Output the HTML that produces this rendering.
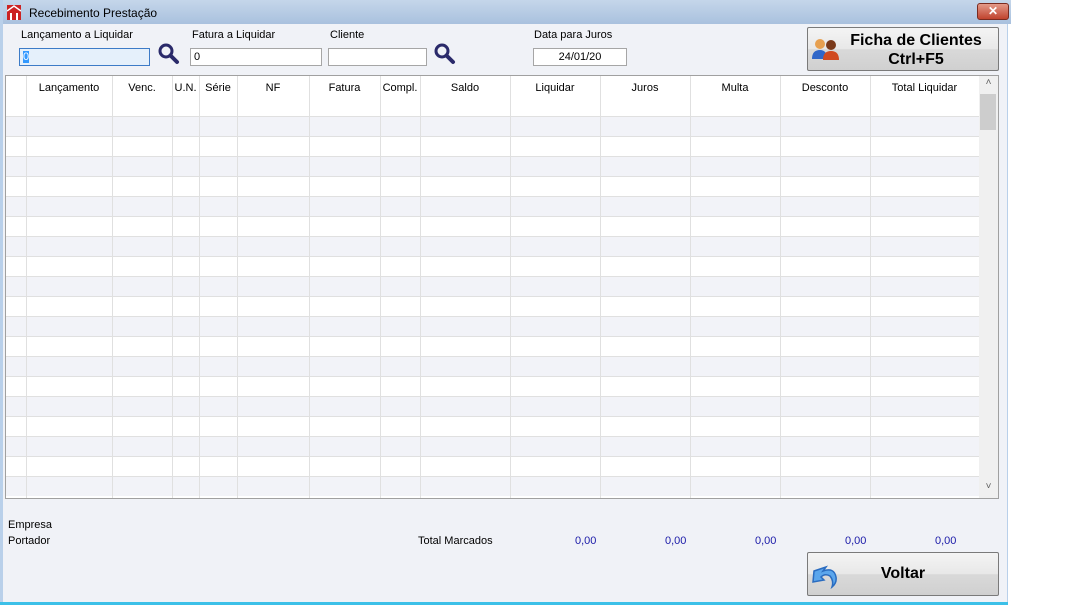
<!DOCTYPE html>
<html><head><meta charset="utf-8"><style>
*{margin:0;padding:0;box-sizing:border-box}
body{width:1080px;height:605px;background:#fff;font-family:"Liberation Sans",Arial,sans-serif;font-size:11px;color:#000;position:relative;overflow:hidden}
.win{position:absolute;left:0;top:0;width:1008px;height:605px;background:#f0f2f7;border-left:3px solid #b9d0ea;border-right:1px solid #b9d0ea}
.title{position:absolute;left:0;top:0;width:1008px;height:24px;background:linear-gradient(#c5d6ea,#a9c1de);}
.title span{position:absolute;left:26px;top:6px;font-size:12px}
.abs{position:absolute}
.lbl{position:absolute;font-size:11px}
.inp{position:absolute;height:18px;background:#fff;border:1px solid #a6a6a6;font-size:11px;padding:2px 3px}
.btn{position:absolute;border:1px solid #7a7a7a;border-radius:2px;background:linear-gradient(#f4f4f4 0,#e8e8e8 50%,#d9d9d9 51%,#d0d0d0 100%);font-weight:bold;text-align:center}
.grid{position:absolute;left:5px;top:75px;width:994px;height:424px;border:1px solid #a0a0a0;background:#fff;overflow:hidden}
.v{position:absolute;top:0;width:1px;height:424px;background:#e0e0e0}
.h{position:absolute;left:0;width:973px;height:20px;border-top:1px solid #e0e0e0}
.hd{position:absolute;top:6px;text-align:center;font-size:11px}
.num{position:absolute;top:535px;color:#1a1aa8;font-size:11px}
</style></head><body>
<div class="win">
<div class="title"><span>Recebimento Prestação</span></div>
</div>
<svg class="abs" style="left:7px;top:5px" width="14" height="15"><rect width="14" height="15" fill="#c22"/><path d="M0 6 L7 1 L14 6" stroke="#fff" stroke-width="1.5" fill="none"/><rect x="3" y="8" width="2" height="7" fill="#fff"/><rect x="9" y="8" width="2" height="7" fill="#fff"/></svg>
<div class="abs" style="left:977px;top:3px;width:32px;height:17px;border:1px solid #7a2b20;border-radius:3px;background:linear-gradient(#e49a89,#c0432e);color:#fff;font-weight:bold;text-align:center;font-size:12px;line-height:15px">✕</div>

<div class="lbl" style="left:21px;top:29px">Lançamento a Liquidar</div>
<div class="inp" style="left:19px;top:48px;width:131px;border-color:#3d7bc7;background:#e5f0fb"><span style="background:#3399ff;color:#fff">0</span></div>
<svg class="abs" style="left:158px;top:43px" width="22" height="22"><circle cx="8" cy="8" r="6" fill="none" stroke="#2a2a6a" stroke-width="3"/><line x1="12.5" y1="12.5" x2="19" y2="19" stroke="#2a2a6a" stroke-width="4" stroke-linecap="round"/></svg>
<div class="lbl" style="left:192px;top:29px">Fatura a Liquidar</div>
<div class="inp" style="left:190px;top:48px;width:132px">0</div>
<div class="lbl" style="left:330px;top:29px">Cliente</div>
<div class="inp" style="left:328px;top:48px;width:99px"></div>
<svg class="abs" style="left:434px;top:43px" width="22" height="22"><circle cx="8" cy="8" r="6" fill="none" stroke="#2a2a6a" stroke-width="3"/><line x1="12.5" y1="12.5" x2="19" y2="19" stroke="#2a2a6a" stroke-width="4" stroke-linecap="round"/></svg>
<div class="lbl" style="left:534px;top:29px">Data para Juros</div>
<div class="inp" style="left:533px;top:48px;width:94px;text-align:center">24/01/20</div>

<div class="btn" style="left:807px;top:27px;width:192px;height:44px;font-size:16px;line-height:19px;padding-top:3px;padding-left:26px">Ficha de Clientes<br>Ctrl+F5</div>
<svg class="abs" style="left:810px;top:35px" width="32" height="26"><circle cx="10" cy="9" r="5" fill="#e7a050"/><path d="M2 24 Q2 15 10 15 Q17 15 17 24Z" fill="#2f66c8"/><circle cx="21" cy="10" r="5" fill="#7a3a1a"/><path d="M13 25 Q13 16 21 16 Q29 16 29 25Z" fill="#d04a20"/></svg>

<div class="grid">
<div class="h" style="top:40px;background:#f2f3f8"></div>
<div class="h" style="top:60px"></div>
<div class="h" style="top:80px;background:#f2f3f8"></div>
<div class="h" style="top:100px"></div>
<div class="h" style="top:120px;background:#f2f3f8"></div>
<div class="h" style="top:140px"></div>
<div class="h" style="top:160px;background:#f2f3f8"></div>
<div class="h" style="top:180px"></div>
<div class="h" style="top:200px;background:#f2f3f8"></div>
<div class="h" style="top:220px"></div>
<div class="h" style="top:240px;background:#f2f3f8"></div>
<div class="h" style="top:260px"></div>
<div class="h" style="top:280px;background:#f2f3f8"></div>
<div class="h" style="top:300px"></div>
<div class="h" style="top:320px;background:#f2f3f8"></div>
<div class="h" style="top:340px"></div>
<div class="h" style="top:360px;background:#f2f3f8"></div>
<div class="h" style="top:380px"></div>
<div class="h" style="top:400px;background:#f2f3f8"></div>
<div class="v" style="left:20px"></div><div class="v" style="left:106px"></div><div class="v" style="left:166px"></div><div class="v" style="left:193px"></div><div class="v" style="left:231px"></div><div class="v" style="left:303px"></div><div class="v" style="left:374px"></div><div class="v" style="left:414px"></div><div class="v" style="left:504px"></div><div class="v" style="left:594px"></div><div class="v" style="left:684px"></div><div class="v" style="left:774px"></div><div class="v" style="left:864px"></div>
<div class="hd" style="left:20px;width:86px">Lançamento</div>
<div class="hd" style="left:106px;width:60px">Venc.</div>
<div class="hd" style="left:166px;width:27px">U.N.</div>
<div class="hd" style="left:193px;width:38px">Série</div>
<div class="hd" style="left:231px;width:72px">NF</div>
<div class="hd" style="left:303px;width:71px">Fatura</div>
<div class="hd" style="left:374px;width:40px">Compl.</div>
<div class="hd" style="left:414px;width:90px">Saldo</div>
<div class="hd" style="left:504px;width:90px">Liquidar</div>
<div class="hd" style="left:594px;width:90px">Juros</div>
<div class="hd" style="left:684px;width:90px">Multa</div>
<div class="hd" style="left:774px;width:90px">Desconto</div>
<div class="hd" style="left:864px;width:109px">Total Liquidar</div>
<div class="abs" style="left:973px;top:0;width:19px;height:422px;background:#f0f0f0"></div>
<div class="abs" style="left:974px;top:18px;width:16px;height:36px;background:#cdcdcd"></div>
<div class="abs" style="left:973px;top:1px;width:19px;text-align:center;color:#606060;font-size:10px">˄</div>
<div class="abs" style="left:973px;top:405px;width:19px;text-align:center;color:#606060;font-size:10px">˅</div>
</div>

<div class="lbl" style="left:8px;top:519px">Empresa</div>
<div class="lbl" style="left:8px;top:535px">Portador</div>
<div class="lbl" style="left:418px;top:535px">Total Marcados</div>
<div class="num" style="left:575px">0,00</div>
<div class="num" style="left:665px">0,00</div>
<div class="num" style="left:755px">0,00</div>
<div class="num" style="left:845px">0,00</div>
<div class="num" style="left:935px">0,00</div>

<div class="btn" style="left:807px;top:552px;width:192px;height:44px;font-size:16px;line-height:42px">Voltar</div>
<svg class="abs" style="left:810px;top:557px" width="34" height="32"><path d="M4 14 L16 10 L13 14 Q24 10 26 20 Q27 26 22 30 Q24 24 20 19 Q15 16 11 20 L14 23 L3 25 Z" fill="#5ba6ec" stroke="#2a6cc0" stroke-width="1.5"/></svg>
<div class="abs" style="left:0;top:602px;width:1008px;height:3px;background:#3cc0e8"></div>
</body></html>
